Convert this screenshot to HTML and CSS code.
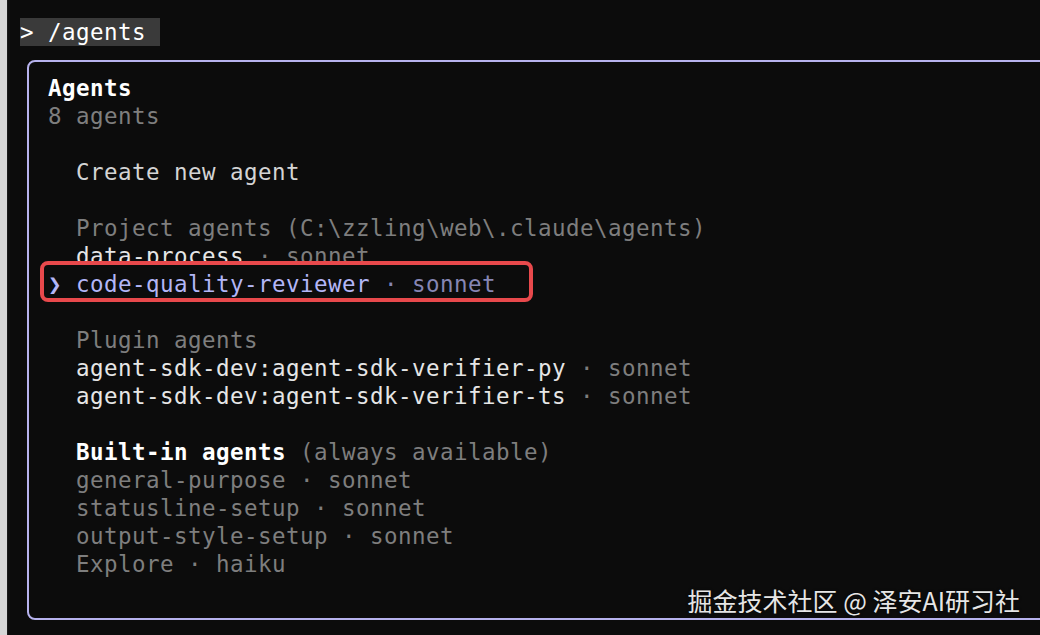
FILE: index.html
```html
<!DOCTYPE html>
<html>
<head>
<meta charset="utf-8">
<link rel="stylesheet" href="styles.css">
</head>
<body>
<div class="shell">
  <div class="edge"></div>
  <main class="term">
    <div class="line"><span class="prompt">&gt; /agents </span></div>
    <section class="panel">
      <div class="line title">Agents</div>
      <div class="line dim">8 agents</div>
      <div class="line"></div>
      <div class="line ind soft">Create new agent</div>
      <div class="line"></div>
      <div class="line ind dim">Project agents (C:\zzling\web\.claude\agents)</div>
      <div class="line ind light">data-process <span class="dim">· sonnet</span></div>
      <div class="line sel"><span class="mark"></span><span class="seltext"><span class="chev">❯</span> code-quality-reviewer <span class="selsub">· sonnet</span></span></div>
      <div class="line"></div>
      <div class="line ind dim">Plugin agents</div>
      <div class="line ind light">agent-sdk-dev:agent-sdk-verifier-py <span class="dim">· sonnet</span></div>
      <div class="line ind light">agent-sdk-dev:agent-sdk-verifier-ts <span class="dim">· sonnet</span></div>
      <div class="line"></div>
      <div class="line ind"><span class="title">Built-in agents</span> <span class="dim">(always available)</span></div>
      <div class="line ind dim">general-purpose · sonnet</div>
      <div class="line ind dim">statusline-setup · sonnet</div>
      <div class="line ind dim">output-style-setup · sonnet</div>
      <div class="line ind dim">Explore · haiku</div>
      <div class="line"></div>
    </section>
  </main>
</div>
<div class="watermark">掘金技术社区 @ 泽安AI研习社</div>
</body>
</html>
```

FILE: styles.css
```css
html, body {
  margin: 0;
  padding: 0;
  background: #0c0c0c;
  overflow: hidden;
  width: 1040px;
  height: 635px;
}
.shell {
  display: flex;
  height: 635px;
}
.edge {
  width: 7px;
  flex: none;
  background: #d6d6d6;
  border-right: 1px solid #1a1a1a;
}
.term {
  flex: 1;
  padding: 18px 0 0 12px;
  font-family: "DejaVu Sans Mono", "Liberation Mono", monospace;
  font-size: 22.5px;
  letter-spacing: 0.455px;
  color: #e0e0e0;
  min-width: 0;
}
.line {
  height: 28px;
  line-height: 28px;
  white-space: pre;
}
.prompt {
  display: inline-block;
  background: #3a3a3a;
  color: #ffffff;
  height: 28px;
}
.panel {
  margin: 14px -40px 0 7px;
  border: 2px solid #b7b3ee;
  border-radius: 8px;
  padding: 12px 0 12px 19px;
}
.title {
  color: #ffffff;
  font-weight: bold;
}
.dim { color: #7e7e7e; }
.soft { color: #d4d4d4; }
.light { color: #e6e6e6; }
.ind { padding-left: 28px; }
.sel {
  position: relative;
}
.mark {
  position: absolute;
  left: -8px;
  top: -9px;
  width: 485px;
  height: 33px;
  border: 4px solid #e8494c;
  border-radius: 8px;
  background: #0c0c0c;
}
.seltext {
  position: relative;
  color: #b3b6f7;
}
.chev { font-weight: bold; }
.selsub { color: #8686b4; }
.watermark {
  position: absolute;
  right: 20px;
  top: 584px;
  font-family: "Noto Sans CJK SC", "Noto Sans", sans-serif;
  font-size: 25px;
  line-height: 32px;
  color: #e6e6e6;
  text-shadow: 0 0 3px rgba(0,0,0,0.6);
}
```
